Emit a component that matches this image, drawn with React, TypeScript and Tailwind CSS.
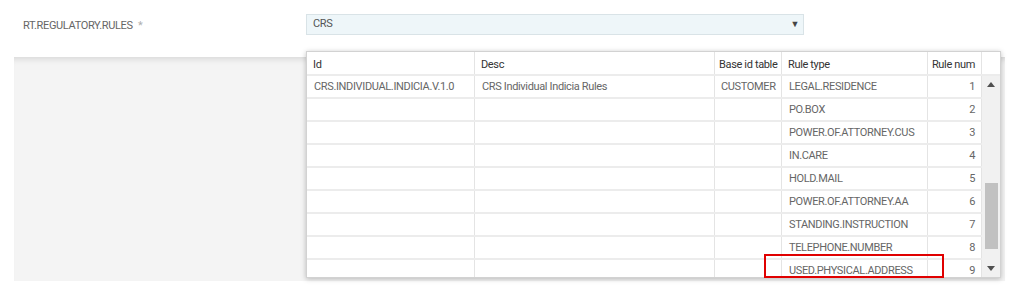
import React from 'react';

type Row = { id: string; desc: string; base: string; ruleType: string; num: number };

const rows: Row[] = [
  { id: 'CRS.INDIVIDUAL.INDICIA.V.1.0', desc: 'CRS Individual Indicia Rules', base: 'CUSTOMER', ruleType: 'LEGAL.RESIDENCE', num: 1 },
  { id: '', desc: '', base: '', ruleType: 'PO.BOX', num: 2 },
  { id: '', desc: '', base: '', ruleType: 'POWER.OF.ATTORNEY.CUS', num: 3 },
  { id: '', desc: '', base: '', ruleType: 'IN.CARE', num: 4 },
  { id: '', desc: '', base: '', ruleType: 'HOLD.MAIL', num: 5 },
  { id: '', desc: '', base: '', ruleType: 'POWER.OF.ATTORNEY.AA', num: 6 },
  { id: '', desc: '', base: '', ruleType: 'STANDING.INSTRUCTION', num: 7 },
  { id: '', desc: '', base: '', ruleType: 'TELEPHONE.NUMBER', num: 8 },
  { id: '', desc: '', base: '', ruleType: 'USED.PHYSICAL.ADDRESS', num: 9 },
];

const cols = 'grid grid-cols-[168px_240px_67px_146px_54px]';

export default function App() {
  return (
    <div className="relative w-[1011px] h-[285px] overflow-hidden bg-white font-['Roboto',sans-serif] text-[11px] tracking-[-0.35px]">
      {/* Field row */}
      <div className="flex items-start pt-[14px] h-[57px]">
        <div className="w-[306px] pl-[23px] pt-[4px] text-[#666]">
          RT.REGULATORY.RULES <span className="ml-[3px] text-[#b0b0b0]">*</span>
        </div>
        <div className="flex items-center justify-between w-[498px] h-[21px] pl-[6px] pr-[4px] bg-[#eef6f9] border border-[#d9e3e7] text-[#555]">
          <span>CRS</span>
          <span className="text-[9px] text-[#444]">▼</span>
        </div>
      </div>

      {/* Grey panel */}
      <div className="ml-[14px] mr-[6px] h-[224px] bg-[#f4f4f4] shadow-[inset_0_7px_6px_-5px_rgba(0,0,0,0.12)]" />

      {/* Dropdown table */}
      <div className="absolute left-[306px] top-[51px] w-[695px] h-[227px] overflow-hidden bg-white border border-[#d2d2d2] shadow-[0_1px_5px_rgba(0,0,0,0.25)]">
        <div className="flex h-[24px] border-b-2 border-[#ececec] text-[#333]">
          <div className={cols}>
            <div className="pl-[6px] pt-[5px] border-r border-[#e4e4e4]">Id</div>
            <div className="pl-[6px] pt-[5px] border-r border-[#e4e4e4]">Desc</div>
            <div className="pl-[4px] pt-[5px] border-r border-[#e4e4e4] whitespace-nowrap">Base id table</div>
            <div className="pl-[6px] pt-[5px] border-r border-[#e4e4e4]">Rule type</div>
            <div className="pr-[6px] pt-[5px] text-right border-r border-[#e4e4e4]">Rule num</div>
          </div>
        </div>
        <div className="flex">
          <div>
            {rows.map((r) => (
              <div key={r.num} className={`${cols} h-[23px] border-b-2 border-[#ececec] text-[#666]`}>
                <div className="pl-[7px] pt-[3px] border-r border-[#e4e4e4]">{r.id}</div>
                <div className="pl-[7px] pt-[3px] border-r border-[#e4e4e4]">{r.desc}</div>
                <div className="pl-[6px] pt-[3px] border-r border-[#e4e4e4]">{r.base}</div>
                <div className="pl-[7px] pt-[3px] border-r border-[#e4e4e4]">{r.ruleType}</div>
                <div className="pr-[6px] pt-[3px] text-right border-r border-[#e4e4e4]">{r.num}</div>
              </div>
            ))}
          </div>
          {/* Scrollbar */}
          <div className="flex flex-col items-center w-[18px] h-[201px] bg-[#f1f1f1]">
            <div className="flex items-center justify-center h-[17px] w-full">
              <svg width="8" height="5" viewBox="0 0 8 5"><path d="M0 5 L4 0 L8 5 Z" fill="#505050" /></svg>
            </div>
            <div className="mt-[90px] w-[13px] h-[66px] bg-[#c1c1c1]" />
            <div className="flex-1" />
            <div className="flex items-center justify-center h-[17px] w-full">
              <svg width="8" height="5" viewBox="0 0 8 5"><path d="M0 0 L8 0 L4 5 Z" fill="#505050" /></svg>
            </div>
          </div>
        </div>
      </div>

      {/* Highlight box */}
      <div className="absolute left-[764px] top-[254px] w-[180px] h-[24px] border-2 border-[#e00000]" />
    </div>
  );
}
